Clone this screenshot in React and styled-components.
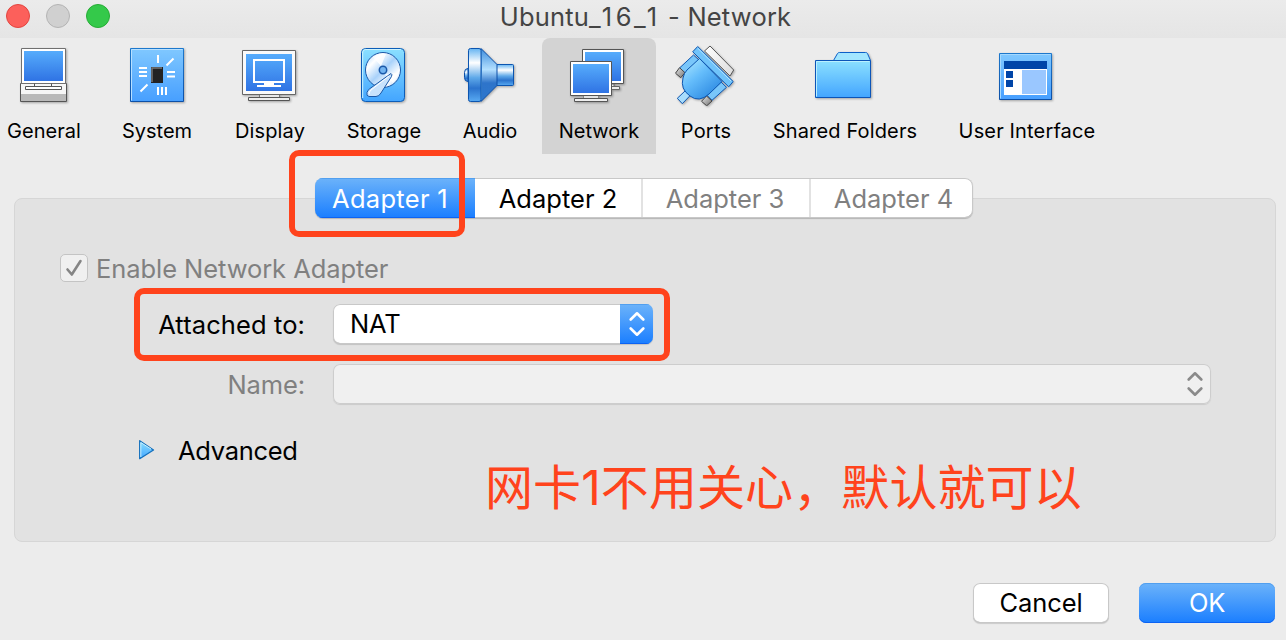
import React from "react";
import styled, { createGlobalStyle, css } from "styled-components";

const GlobalStyle = createGlobalStyle`
  * { box-sizing: border-box; }
  body {
    margin: 0;
    background: #ececec;
    font-family: Inter, "Noto Sans CJK SC", sans-serif;
    font-size: 25.5px;
    font-weight: 440;
    color: #000;
    overflow: hidden;
  }
`;

const Window = styled.main`
  position: relative;
  display: flex;
  flex-direction: column;
  width: 1286px;
  height: 640px;
  background: #ececec;
`;

const TitleBar = styled.header`
  display: grid;
  grid-template-columns: 120px 1fr 115px;
  height: 38px;
  background: linear-gradient(#ebebeb, #e5e5e5);
`;

const Lights = styled.div`
  display: flex;
  gap: 16px;
  padding: 4px 0 0 6px;
`;

const Light = styled.span`
  width: 24px;
  height: 24px;
  border-radius: 50%;
  background: ${(p) => p.$fill};
  border: 1px solid ${(p) => p.$edge};
`;

const Title = styled.h1`
  margin: 0;
  text-align: center;
  font-size: 25.5px;
  font-weight: 430;
  line-height: 34px;
  letter-spacing: 0.2px;
  color: #444;
  white-space: nowrap;
`;

const MachineSuffix = styled.span`
  letter-spacing: 3.7px;
`;

const Toolbar = styled.nav`
  display: flex;
  height: 116px;
`;

const Tool = styled.button`
  display: flex;
  flex-direction: column;
  align-items: center;
  flex: none;
  width: ${(p) => p.$width}px;
  margin: 0 0 0 ${(p) => p.$before || 0}px;
  padding: 4px 0 0;
  border: 0;
  border-radius: ${(p) => (p.$active ? "8px 8px 0 0" : "0")};
  background: ${(p) => (p.$active ? "#d3d3d3" : "transparent")};
  font: 440 20px/24px Inter, sans-serif;
  letter-spacing: ${(p) => p.$tracking}px;
  color: #000;
  white-space: nowrap;
`;

const ToolIcon = styled.svg`
  display: block;
  width: 64px;
  height: 64px;
  margin-bottom: 13px;
  filter: drop-shadow(1px 1px 1px rgba(0, 0, 0, 0.3));
`;

const Content = styled.section`
  display: flex;
  flex-direction: column;
  padding: 24px 10px 0 14px;
`;

const Tabs = styled.div`
  position: relative;
  z-index: 1;
  display: flex;
  align-self: flex-start;
  width: 658px;
  height: 40px;
  margin: 0 0 -20px 301px;
  border-radius: 8px;
  background: #fff;
  box-shadow: 0 1px 1px rgba(0, 0, 0, 0.2), inset 0 0 0 1px #c8c8c8,
    inset 0 -1px #a8a8a8;
  overflow: hidden;
`;

const blueFace = css`
  background: linear-gradient(#6cb3fa, #1a7eff);
  box-shadow: inset 0 1px #519fef, inset 0 -1px #0c63f3;
  color: #fff;
`;

const Tab = styled.button`
  width: ${(p) => p.$width}px;
  padding: 0 ${(p) => p.$padRight || 0}px 0 ${(p) => p.$padLeft || 0}px;
  border: 0;
  background: ${(p) =>
    p.$divided
      ? "linear-gradient(#e2e2e2, #e2e2e2) 0 1px / 2px 38px no-repeat"
      : "transparent"};
  font: inherit;
  line-height: 42px;
  letter-spacing: ${(p) => p.$tracking}px;
  color: ${(p) => (p.$muted ? "#808080" : "#000")};
  white-space: nowrap;
  ${(p) => p.$active && blueFace}
`;

const Panel = styled.div`
  width: 1262px;
  height: 344px;
  padding: 53px 0 0;
  border: 1px solid #d6d6d6;
  border-radius: 8px;
  background: #e2e2e2;
`;

const EnableRow = styled.label`
  display: flex;
  align-items: center;
  gap: 8px;
  height: 32px;
  padding-left: 45px;
  letter-spacing: ${(p) => p.$tracking}px;
  color: #808080;
`;

const CheckBox = styled.span`
  display: grid;
  place-items: center;
  width: 28px;
  height: 28px;
  border: 1px solid #c4c4c4;
  border-radius: 5px;
  background: #f0f0f0;
`;

const Field = styled.div`
  display: grid;
  grid-template-columns: 290px auto;
  column-gap: 28px;
  align-items: center;
  justify-content: start;
  height: 40px;
  margin-top: 20px;
`;

const FieldLabel = styled.span`
  text-align: right;
  line-height: 38px;
  padding-top: 2px;
  letter-spacing: ${(p) => p.$tracking}px;
  color: ${(p) => (p.$muted ? "#808080" : "#000")};
  white-space: nowrap;
`;

const Select = styled.div`
  display: flex;
  justify-content: space-between;
  width: ${(p) => p.$width}px;
  height: 40px;
  padding-left: 17px;
  border-radius: 7px;
  background: ${(p) => (p.$muted ? "#f0f0f0" : "#fff")};
  box-shadow: inset 0 0 0 1px #c8c8c8, inset 0 -1px #a8a8a8,
    0 1px 1px rgba(0, 0, 0, 0.14);
  ${(p) =>
    p.$muted &&
    css`
      box-shadow: inset 0 0 0 1px #cdcdcd, 0 1px 1px rgba(0, 0, 0, 0.1);
    `}
  line-height: 40px;
  letter-spacing: ${(p) => p.$tracking}px;
  overflow: hidden;
`;

const Stepper = styled.span`
  display: grid;
  place-items: center;
  width: 33px;
  height: 40px;
  ${(p) => p.$active && blueFace}
`;

const Advanced = styled.div`
  display: flex;
  align-items: center;
  gap: 23px;
  height: 36px;
  margin-top: 28px;
  padding-left: 123px;
  letter-spacing: ${(p) => p.$tracking}px;
`;

const Footer = styled.footer`
  display: flex;
  justify-content: flex-end;
  gap: 30px;
  padding: 41px 11px 0 0;
`;

const Button = styled.button`
  width: 136px;
  height: 40px;
  padding: 0;
  border: 0;
  border-radius: 7px;
  background: #fff;
  box-shadow: inset 0 0 0 1px #c8c8c8, inset 0 -1px #a8a8a8,
    0 1px 1px rgba(0, 0, 0, 0.14);
  font: inherit;
  line-height: 40px;
  letter-spacing: ${(p) => p.$tracking}px;
  color: #000;
  ${(p) => p.$primary && blueFace}
`;

const Highlight = styled.div`
  position: absolute;
  z-index: 2;
  left: ${(p) => p.$x}px;
  top: ${(p) => p.$y}px;
  width: ${(p) => p.$w}px;
  height: ${(p) => p.$h}px;
  border: 6px solid #ff431c;
  border-radius: 10px;
  pointer-events: none;
`;

const Note = styled.p`
  position: absolute;
  z-index: 2;
  left: 485px;
  top: 453px;
  margin: 0;
  font-size: 48px;
  font-weight: 400;
  line-height: 70px;
  letter-spacing: 0.1px;
  color: #ff431c;
  white-space: nowrap;
`;

const Gradients = () => (
  <svg width="0" height="0" style={{ position: "absolute" }} aria-hidden="true">
    <defs>
      <linearGradient id="screen" x1="0" y1="0" x2="0" y2="1">
        <stop offset="0" stopColor="#56acfc" />
        <stop offset="1" stopColor="#2f73e4" />
      </linearGradient>
      <linearGradient id="tile" x1="0" y1="0" x2="0" y2="1">
        <stop offset="0" stopColor="#80c8ff" />
        <stop offset="1" stopColor="#479fff" />
      </linearGradient>
      <linearGradient id="cyan" x1="0" y1="0" x2="0" y2="1">
        <stop offset="0" stopColor="#8be0ff" />
        <stop offset="1" stopColor="#43a5ff" />
      </linearGradient>
      <linearGradient id="edge" x1="0" y1="0" x2="0" y2="1">
        <stop offset="0" stopColor="#1d78cc" />
        <stop offset="1" stopColor="#0c50a8" />
      </linearGradient>
      <linearGradient id="disc" x1="0" y1="0" x2="1" y2="1">
        <stop offset="0" stopColor="#a5d2fb" />
        <stop offset=".25" stopColor="#fff" />
        <stop offset=".5" stopColor="#a9d2fa" />
        <stop offset=".75" stopColor="#fff" />
        <stop offset="1" stopColor="#8cc0f5" />
      </linearGradient>
      <linearGradient id="metal" x1="0" y1="0" x2="0" y2="1">
        <stop offset="0" stopColor="#65b4f2" />
        <stop offset=".27" stopColor="#fff" />
        <stop offset=".55" stopColor="#5fa9e9" />
        <stop offset=".75" stopColor="#2b73cd" />
        <stop offset="1" stopColor="#58aaf2" />
      </linearGradient>
      <linearGradient id="cone" x1="0" y1="0" x2="0" y2="1">
        <stop offset="0" stopColor="#3d8ddd" />
        <stop offset=".4" stopColor="#b4e0ff" />
        <stop offset=".65" stopColor="#2e74ca" />
        <stop offset="1" stopColor="#2d77cd" />
      </linearGradient>
      <linearGradient id="plug" x1="0" y1="0" x2=".8" y2="1">
        <stop offset="0" stopColor="#b5ecff" />
        <stop offset=".45" stopColor="#65bdfb" />
        <stop offset="1" stopColor="#2785e0" />
      </linearGradient>
      <linearGradient id="steel" x1="0" y1="0" x2="1" y2="1">
        <stop offset="0" stopColor="#e8e8e8" />
        <stop offset="1" stopColor="#707070" />
      </linearGradient>
      <linearGradient id="paper" x1="0" y1="0" x2="1" y2="1">
        <stop offset="0" stopColor="#fff" />
        <stop offset="1" stopColor="#dcdcdc" />
      </linearGradient>
    </defs>
  </svg>
);

const GeneralIcon = () => (
  <ToolIcon viewBox="12 42 64 64">
    <path d="M20.5 83.5h46v18h-46z" fill="#f6f6f6" stroke="#555" />
    <path d="M21 94h45v7H21z" fill="#b9b9b9" />
    <path d="M21.5 48.5h44v35h-44z" fill="#fff" stroke="#707070" />
    <path d="M24 51h39v30H24z" fill="url(#screen)" />
    <path d="M34.500 83.500v3M51.500 83.500v3M25.500 86.500h36v3h-36z" fill="#fff" stroke="#555" />
  </ToolIcon>
);

const SystemIcon = () => (
  <ToolIcon viewBox="125 42 64 64">
    <path d="M130.500 48.500h53v53h-53z" fill="url(#tile)" stroke="url(#edge)" />
    <path d="M131.500 100.500v-51h51" fill="none" stroke="#b8e0ff" />
    <path d="M158 55v8M166.500 65.500l7-7M139 68h8M139 72h8M139 76h8M167 72h8M167 76.500h8M140.500 91.500l7-7M158 87v8M162 87v8M166 87v8" stroke="#fff" strokeWidth="2" />
    <path d="M151 67h12v16h-12z" fill="#222" />
    <path d="M152 82V68h10" fill="none" stroke="#777" strokeWidth="1.500" />
  </ToolIcon>
);

const DisplayIcon = () => (
  <ToolIcon viewBox="238 42 64 64">
    <path d="M259.500 94.500h20v4h-20z" fill="#e9e9e9" stroke="#777" />
    <path d="M248.500 97.500h41v3h-41z" fill="#eee" stroke="#555" />
    <path d="M242.500 50.500h53v44h-53z" fill="#fafafa" stroke="#666" />
    <path d="M246 54h46v37h-46z" fill="url(#screen)" />
    <path d="M254 60h30v22h-30z" fill="none" stroke="#fff" strokeWidth="2" />
    <path d="M264 83h10v2h7v2h-24v-2h7z" fill="#fff" />
  </ToolIcon>
);

const StorageIcon = () => (
  <ToolIcon viewBox="352 42 64 64">
    <rect x="361.500" y="48.500" width="43" height="53" rx="4" fill="url(#cyan)" stroke="#0c5db8" />
    <path d="M362.700 98V52q0-2.500 3-2.500h35" fill="none" stroke="#cff4ff" />
    <circle cx="383" cy="70" r="17.500" fill="url(#disc)" stroke="#1a58a8" />
    <path d="M381 66l-8-9q8-5 13-3zM385 74l8 9q5-5 5-10z" fill="#fff" opacity=".8" />
    <circle cx="383" cy="70" r="3.700" fill="#72b4f1" stroke="#1a58a8" strokeWidth="1.500" />
    <path d="M391 73.500q1.500.8.500 3L381 93q-2 3.500-5 3.500h-7q-3-.5-2-4 .7-2.500 3-4z" fill="#c8e2fc" stroke="#1a58a8" />
    <path d="M389 76l-18 14q-2 2-2 4" fill="none" stroke="#fff" />
  </ToolIcon>
);

const AudioIcon = () => (
  <ToolIcon viewBox="458 42 64 64">
    <path d="M468 68.500q-3.500 0-3.500 4v5q0 4 3.500 4z" fill="url(#metal)" stroke="#0c4fa8" />
    <rect x="495" y="64.500" width="18.500" height="21" rx="1" fill="url(#metal)" stroke="#0c55b0" />
    <path d="M481 48.500l16 16v21l-16 16z" fill="url(#cone)" stroke="#0c4fa8" />
    <rect x="468.500" y="48.500" width="12.500" height="53" rx="2" fill="url(#metal)" stroke="#0c55b0" />
    <path d="M481.500 50v50" stroke="#2e74c2" />
  </ToolIcon>
);

const NetworkIcon = () => (
  <ToolIcon viewBox="567 42 64 64">
    <path d="M597 84h17v2.500H597zM590.500 86.500h29v3h-29z" fill="#eee" stroke="#666" />
    <path d="M582.500 49.500h41v34h-41z" fill="#fff" stroke="#555" />
    <path d="M585 52h36v29h-36z" fill="url(#screen)" />
    <path d="M583.500 94.500h15v4h-15z" fill="#e3e3e3" stroke="#888" />
    <path d="M574.500 98.500h33v3h-33z" fill="#eee" stroke="#555" />
    <path d="M570.500 61.500h41v34h-41z" fill="#fff" stroke="#555" />
    <path d="M573 64h36v29h-36z" fill="url(#screen)" />
  </ToolIcon>
);

const PortsIcon = () => (
  <ToolIcon viewBox="674 42 64 64">
    <g strokeLinejoin="round">
      <path d="M710 46l23.700 24-3.700 6-25.500-25z" fill="url(#paper)" stroke="#555" />
      <path d="M685 91l5 4.700-7.700 8-5-5.400z" fill="#a8dcfc" stroke="#0c55b0" />
      <path d="M693.500 55l5.500 5-14 14-5.500-6z" fill="#79c6fa" stroke="#0c55b0" />
      <path d="M679.500 67.700l5.500 5-4.300 5-5.200-4.500z" fill="url(#steel)" stroke="#444" />
      <path d="M721 82l5.500 5.300-14.500 13-5-5z" fill="#79c6fa" stroke="#0c55b0" />
      <path d="M706.500 96l5.500 5-5.300 4.800-5.200-4.500z" fill="url(#steel)" stroke="#444" />
      <path d="M699.500 58.500L722 81.500 709 94q-10 9-19 2-10-7-7-18 1-5 4-8z" fill="url(#plug)" stroke="#0c55b0" />
      <path d="M697.700 46.500l35.500 35-4.500 5.300-36-35z" fill="#70c3fa" stroke="#0c55b0" />
      <path d="M697.700 48.200l33.500 33" stroke="#b7e6ff" />
    </g>
  </ToolIcon>
);

const FolderIcon = () => (
  <ToolIcon viewBox="813 42 64 64">
    <path d="M833.500 60.500l4-7q.7-1 2-1h26q1.500 0 2 1l3 7z" fill="#a2e6ff" stroke="#0c60c8" />
    <path d="M815.500 60.500h55v37h-55z" fill="url(#cyan)" stroke="#0c55b8" />
    <path d="M816.500 96.500v-35h53" fill="none" stroke="#baf0ff" />
  </ToolIcon>
);

const InterfaceIcon = () => (
  <ToolIcon viewBox="995 42 64 64">
    <path d="M999.500 53.500h52v46h-52z" fill="url(#tile)" stroke="url(#edge)" />
    <path d="M1000.500 98.500v-44h50" fill="none" stroke="#a5d9ff" />
    <path d="M1004 69h43v26h-43z" fill="#fff" />
    <path d="M1004 61h43v8h-43zM1006 71h7v7h-7zM1006 80h7v7h-7z" fill="#0045a8" />
    <path d="M1022 70h24v24h-24z" fill="#9ac7ff" />
  </ToolIcon>
);

const Chevrons = ({ color }) => (
  <svg width="16" height="26" viewBox="0 0 16 26" fill="none" stroke={color} strokeWidth="2.600" strokeLinecap="round" strokeLinejoin="round">
    <path d="M1.700 8.500L8 2.300l6.300 6.200M1.700 17.500L8 23.700l6.300-6.200" />
  </svg>
);

const tools = [
  { name: "General", width: 88, Icon: GeneralIcon, tracking: 0.05 },
  { name: "System", width: 138, Icon: SystemIcon, tracking: 0 },
  { name: "Display", width: 88, Icon: DisplayIcon, tracking: 0.15 },
  { name: "Storage", width: 140, Icon: StorageIcon, tracking: 0.1 },
  { name: "Audio", width: 72, Icon: AudioIcon, tracking: 0 },
  { name: "Network", width: 114, before: 16, active: true, Icon: NetworkIcon, tracking: 0 },
  { name: "Ports", width: 100, Icon: PortsIcon, tracking: 0.2 },
  { name: "Shared Folders", width: 178, Icon: FolderIcon, tracking: 0.15 },
  { name: "User Interface", width: 186, Icon: InterfaceIcon, tracking: 0.15 },
];

export default function App() {
  return (
    <>
      <GlobalStyle />
      <Gradients />
      <Window>
        <TitleBar>
          <Lights>
            <Light $fill="#fc605b" $edge="#e2453f" />
            <Light $fill="#d0d0d0" $edge="#b4b4b4" />
            <Light $fill="#34c94a" $edge="#26ac35" />
          </Lights>
          <Title>
            Ubuntu<MachineSuffix>_16_1</MachineSuffix> - Network
          </Title>
        </TitleBar>
        <Toolbar>
          {tools.map(({ name, width, before, active, Icon, tracking }) => (
            <Tool key={name} $width={width} $before={before} $active={active} $tracking={tracking}>
              <Icon />
              {name}
            </Tool>
          ))}
        </Toolbar>
        <Content>
          <Tabs>
            <Tab $width={160} $active $padRight={10} $tracking={0.3}>Adapter 1</Tab>
            <Tab $width={166} $tracking={0}>Adapter 2</Tab>
            <Tab $width={168} $divided $muted $tracking={0}>Adapter 3</Tab>
            <Tab $width={164} $padLeft={5} $divided $muted $tracking={0}>Adapter 4</Tab>
          </Tabs>
          <Panel>
            <EnableRow $tracking={-0.07}>
              <CheckBox>
                <svg width="18" height="18" viewBox="0 0 18 18" fill="none" stroke="#858585" strokeWidth="2.600" strokeLinecap="round" strokeLinejoin="round">
                  <path d="M2.500 10.500l4.300 5L15.500 2" />
                </svg>
              </CheckBox>
              Enable Network Adapter
            </EnableRow>
            <Field>
              <FieldLabel $tracking={0.1}>Attached to:</FieldLabel>
              <Select $width={320} $tracking={-0.2}>
                NAT
                <Stepper $active><Chevrons color="#fff" /></Stepper>
              </Select>
            </Field>
            <Field>
              <FieldLabel $muted $tracking={-0.1}>Name:</FieldLabel>
              <Select $width={878} $muted>
                <span />
                <Stepper><Chevrons color="#8a8a8a" /></Stepper>
              </Select>
            </Field>
            <Advanced $tracking={-0.3}>
              <svg width="17" height="22" viewBox="0 0 17 22">
                <path d="M1.700 1.700v18L15.500 11z" fill="url(#cyan)" stroke="#1470bd" strokeWidth="1.300" strokeLinejoin="round" />
                <path d="M2.800 18V3.500L13 10" fill="none" stroke="#c8f0ff" />
              </svg>
              Advanced
            </Advanced>
          </Panel>
        </Content>
        <Footer>
          <Button $tracking={-0.1}>Cancel</Button>
          <Button $primary $tracking={-0.3}>OK</Button>
        </Footer>
        <Highlight $x={289} $y={150} $w={176} $h={87} />
        <Highlight $x={134} $y={288} $w={536} $h={73} />
        <Note>网卡1不用关心，默认就可以</Note>
      </Window>
    </>
  );
}
